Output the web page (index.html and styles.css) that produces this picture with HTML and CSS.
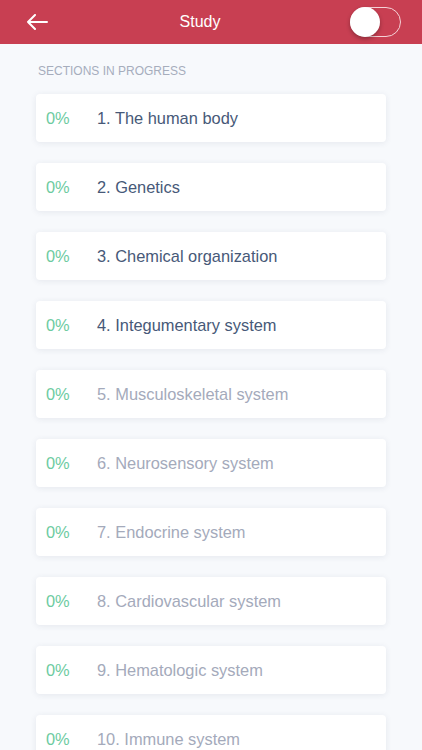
FILE: index.html
```html
<!DOCTYPE html>
<html lang="en">
<head>
    <meta charset="UTF-8">
    <meta name="viewport" content="width=device-width, initial-scale=1.0">
    <title>Study</title>
    <link rel="stylesheet" href="styles.css">
</head>
<body>
    <header class="topbar">
        <a href="#" class="back">
            <svg width="22" height="16" viewBox="0 0 22 16">
                <path d="M21 8H2M9 1L2 8l7 7" fill="none" stroke="#fff" stroke-width="2" stroke-linecap="round" stroke-linejoin="round"/>
            </svg>
        </a>
        <h1>Study</h1>
        <div class="toggle"><span class="knob"></span></div>
    </header>

    <main class="content">
        <div class="section-label">SECTIONS IN PROGRESS</div>

        <ul class="sections">
            <li class="card"><span class="pct">0%</span><span class="name">1. The human body</span></li>
            <li class="card"><span class="pct">0%</span><span class="name">2. Genetics</span></li>
            <li class="card"><span class="pct">0%</span><span class="name">3. Chemical organization</span></li>
            <li class="card"><span class="pct">0%</span><span class="name">4. Integumentary system</span></li>
            <li class="card locked"><span class="pct">0%</span><span class="name">5. Musculoskeletal system</span></li>
            <li class="card locked"><span class="pct">0%</span><span class="name">6. Neurosensory system</span></li>
            <li class="card locked"><span class="pct">0%</span><span class="name">7. Endocrine system</span></li>
            <li class="card locked"><span class="pct">0%</span><span class="name">8. Cardiovascular system</span></li>
            <li class="card locked"><span class="pct">0%</span><span class="name">9. Hematologic system</span></li>
            <li class="card locked"><span class="pct">0%</span><span class="name">10. Immune system</span></li>
        </ul>
    </main>
</body>
</html>
```

FILE: styles.css
```css
body {
    font-family: "Liberation Sans", Arial, sans-serif;
    margin: 0;
    padding: 0;
    background-color: #f7f9fc;
    overflow: hidden;
}

.topbar {
    height: 44px;
    background: #c83f52;
    display: flex;
    align-items: center;
    padding: 0 21px 0 26px;
}

.back {
    display: flex;
    width: 22px;
    height: 16px;
}

.topbar h1 {
    flex: 1;
    margin: 0;
    text-align: center;
    color: #fff;
    font-size: 16px;
    font-weight: normal;
    padding-left: 2px;
}

.toggle {
    width: 51px;
    height: 30px;
    border: 1.5px solid #f5d2d7;
    border-radius: 16px;
    box-sizing: border-box;
    position: relative;
}

.knob {
    position: absolute;
    left: -1.5px;
    top: -1.5px;
    width: 30px;
    height: 30px;
    border-radius: 50%;
    background: #fff;
    box-shadow: 0 2px 4px rgba(0, 0, 0, 0.3);
}

.content {
    padding: 0 36px;
}

.section-label {
    font-size: 12px;
    color: #a6adbc;
    padding: 20px 0 0 2px;
    height: 30px;
}

.sections {
    margin: 0;
    padding: 0;
    list-style: none;
}

.card {
    height: 48px;
    background: #fff;
    border-radius: 4px;
    box-shadow: 0 1px 6px rgba(40, 55, 90, 0.09);
    display: flex;
    align-items: center;
    margin-bottom: 21px;
    font-size: 16.4px;
}

.pct {
    width: 51px;
    padding-left: 10px;
    color: #6dcb9f;
}

.name {
    color: #475978;
}

.card.locked .name {
    color: #a4aabb;
}
```
